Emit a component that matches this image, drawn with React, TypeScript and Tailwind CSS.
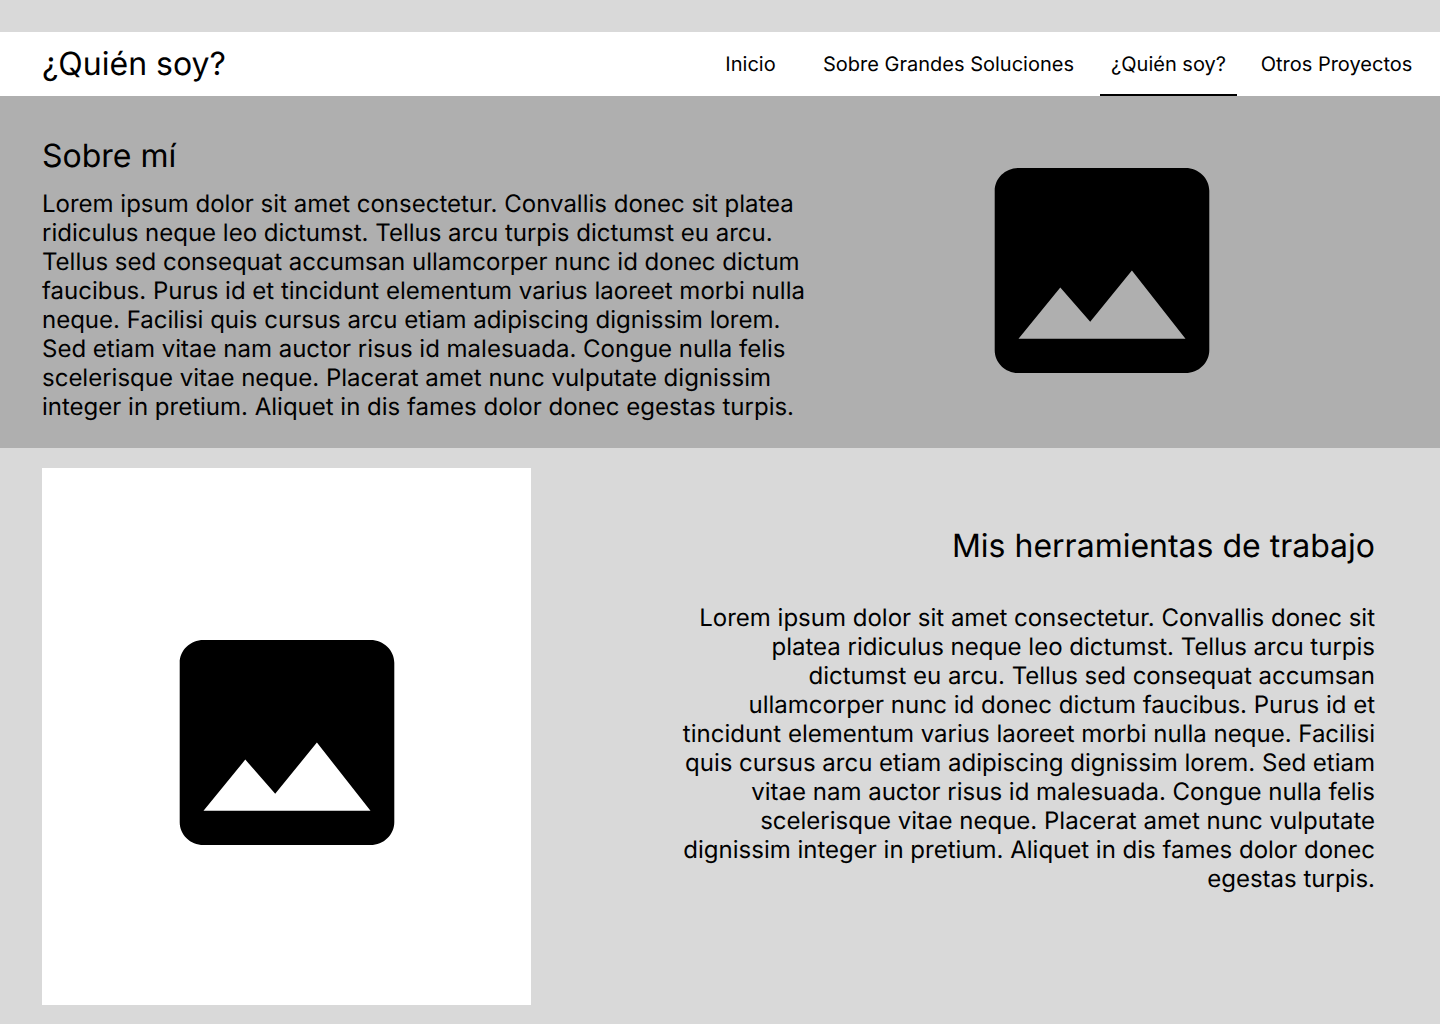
type ImageIconProps = { className?: string };

function ImageIcon({ className }: ImageIconProps) {
  return (
    <svg
      viewBox="0 0 216 206"
      className={className}
      fill="currentColor"
      role="img"
      aria-label="Imagen"
    >
      <path d="M215.3 182.2V22.8C215.3 10.3 204.6 0 191.500 0H24.500C11.300 0 0.700 10.300 0.700 22.800V182.200C0.700 194.700 11.300 205 24.500 205H191.500C204.600 205 215.300 194.700 215.300 182.200ZM66.300 119.600L96.200 153.800L137.900 102.500L191.500 170.800H24.500L66.300 119.600Z" />
    </svg>
  );
}

const links = [
  { label: "Inicio", href: "#inicio", className: "w-[93px]" },
  { label: "Sobre Grandes Soluciones", href: "#soluciones", className: "w-[303px]" },
  {
    label: "¿Quién soy?",
    href: "#quien-soy",
    className: "w-[137px] border-b-2 border-black pt-[2px]",
  },
  { label: "Otros Proyectos", href: "#proyectos", className: "w-[199px]" },
];

export default function App() {
  return (
    <div className="min-h-screen bg-[#d9d9d9] pt-8 font-['Inter',sans-serif] text-black [text-rendering:geometricPrecision]">
      <header className="flex h-16 items-center justify-between bg-white pl-[42px] pr-1">
        <h1 className="text-[32px] leading-10">¿Quién soy?</h1>
        <nav className="flex h-full" aria-label="Principal">
          {links.map((link) => (
            <a
              key={link.label}
              href={link.href}
              className={`flex items-center justify-center text-xl ${link.className}`}
            >
              {link.label}
            </a>
          ))}
        </nav>
      </header>
      <main>
        <section className="flex bg-[#afafaf] pb-[27px] pl-[42px] pt-10">
          <div className="w-[776px]">
            <h2 className="text-[32px] leading-10">Sobre mí</h2>
            <p className="mt-[13px] text-2xl leading-[29px]">
              Lorem ipsum dolor sit amet consectetur. Convallis donec sit platea ridiculus neque leo
              dictumst. Tellus arcu turpis dictumst eu arcu. Tellus sed consequat accumsan
              ullamcorper nunc id donec dictum faucibus. Purus id et tincidunt elementum varius
              laoreet morbi nulla neque. Facilisi quis cursus arcu etiam adipiscing dignissim lorem.
              Sed etiam vitae nam auctor risus id malesuada. Congue nulla felis scelerisque vitae
              neque. Placerat amet nunc vulputate dignissim integer in pretium. Aliquet in dis fames
              dolor donec egestas turpis.
            </p>
          </div>
          <div className="flex flex-1 justify-center pr-[54px] pt-8">
            <ImageIcon className="h-[206px] w-[216px]" />
          </div>
        </section>
        <section className="flex justify-between pb-[19px] pl-[42px] pr-[65px] pt-5">
          <div className="flex h-[537px] w-[489px] items-center justify-center bg-white">
            <ImageIcon className="mt-3 h-[206px] w-[216px]" />
          </div>
          <div className="w-[52%] pt-[58px] text-right">
            <h2 className="text-[32px] leading-10">Mis herramientas de trabajo</h2>
            <p className="mt-[37px] text-2xl leading-[29px]">
              Lorem ipsum dolor sit amet consectetur. Convallis donec sit platea ridiculus neque leo
              dictumst. Tellus arcu turpis dictumst eu arcu. Tellus sed consequat accumsan
              ullamcorper nunc id donec dictum faucibus. Purus id et tincidunt elementum varius
              laoreet morbi nulla neque. Facilisi quis cursus arcu etiam adipiscing dignissim lorem.
              Sed etiam vitae nam auctor risus id malesuada. Congue nulla felis scelerisque vitae
              neque. Placerat amet nunc vulputate dignissim integer in pretium. Aliquet in dis fames
              dolor donec egestas turpis.
            </p>
          </div>
        </section>
      </main>
    </div>
  );
}
